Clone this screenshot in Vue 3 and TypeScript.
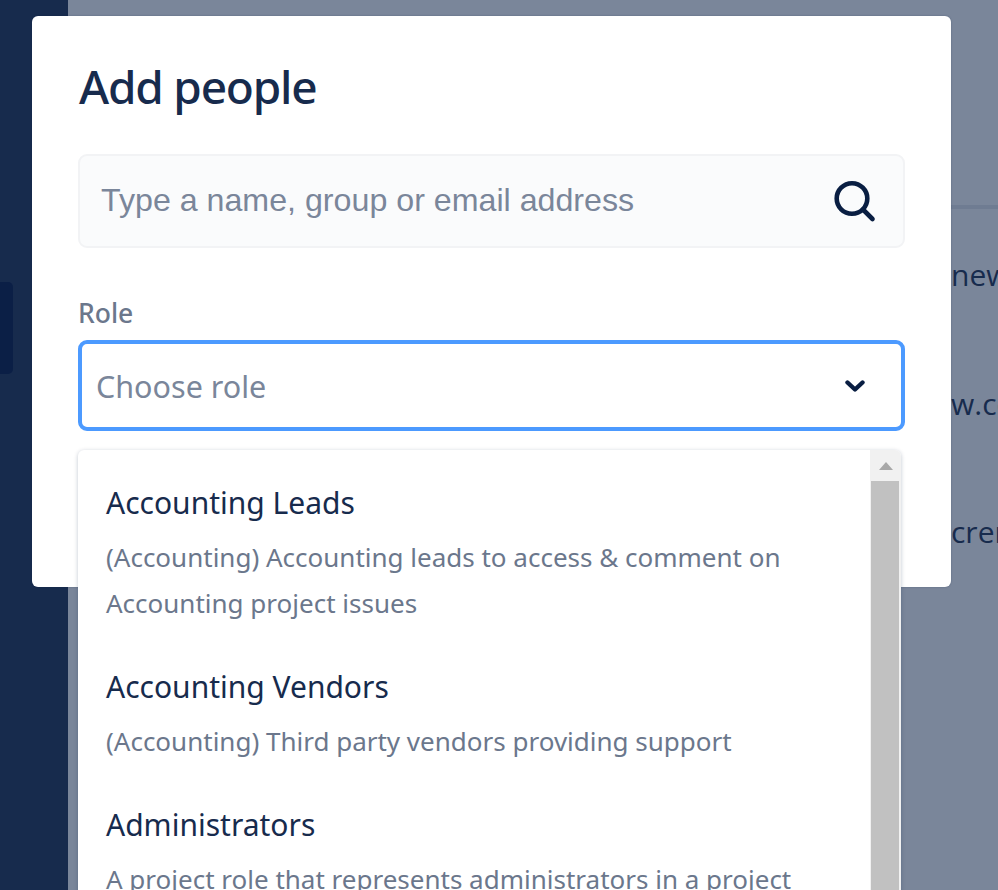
<script setup lang="ts">
interface Role { name: string; desc: string[] }
const roles: Role[] = [
  { name: 'Accounting Leads', desc: ['(Accounting) Accounting leads to access & comment on', 'Accounting project issues'] },
  { name: 'Accounting Vendors', desc: ['(Accounting) Third party vendors providing support'] },
  { name: 'Administrators', desc: ['A project role that represents administrators in a project'] },
]
const behind: string[] = ['new', 'w.co', 'crem']
</script>

<template>
  <div class="page">
    <aside class="sidebar"><div class="side-item"></div></aside>
    <main class="content">
      <div class="rule"></div>
      <div class="behind">
        <p v-for="t in behind" :key="t" class="behind-row">{{ t }}</p>
      </div>
    </main>

    <section class="modal">
      <h1 class="title">Add people</h1>
      <div class="search">
        <span class="search-ph">Type a name, group or email address</span>
        <svg class="search-icon" width="44" height="44" viewBox="0 0 44 44" fill="none">
          <circle cx="20" cy="19.5" r="15.3" stroke="#091e42" stroke-width="4.6" />
          <path d="M31 30.5 L40.5 40" stroke="#091e42" stroke-width="4.6" stroke-linecap="round" />
        </svg>
      </div>
      <label class="label">Role</label>
      <div class="select">
        <span class="select-ph">Choose role</span>
        <svg class="chevron" width="20" height="14" viewBox="0 0 20 14" fill="none">
          <path d="M2.5 3.5 L10 10.5 L17.5 3.5" stroke="#091e42" stroke-width="4.4" stroke-linecap="round" stroke-linejoin="round" />
        </svg>
      </div>
    </section>

    <div class="menu">
      <div class="list">
        <div v-for="r in roles" :key="r.name" class="option">
          <div class="opt-name">{{ r.name }}</div>
          <div v-for="d in r.desc" :key="d" class="opt-desc">{{ d }}</div>
        </div>
      </div>
      <div class="scrollbar">
        <div class="scroll-up"><span class="arrow"></span></div>
        <div class="thumb"></div>
      </div>
    </div>
  </div>
</template>

<style>
html, body { margin: 0; padding: 0; background: #7a869a; }
</style>

<style scoped>
.page {
  position: relative;
  width: 998px;
  height: 890px;
  overflow: hidden;
  display: flex;
  background: #7a869a;
  font-family: "Open Sans", "Noto Sans", sans-serif;
}
.sidebar {
  width: 68px;
  flex: none;
  background: #172b4d;
  padding-top: 282px;
  box-sizing: border-box;
}
.side-item {
  width: 13px;
  height: 92px;
  background: #0b1f46;
  border-radius: 0 5px 5px 0;
}
.content {
  flex: 1;
  padding-top: 205px;
  min-width: 0;
}
.rule {
  height: 4px;
  background: #6f7c92;
}
.behind {
  padding: 41px 0 0 883px;
  white-space: nowrap;
}
.behind-row {
  margin: 0;
  height: 128.5px;
  font-size: 30px;
  line-height: 50px;
  color: #172b4d;
}
.modal {
  position: absolute;
  left: 32px;
  top: 16px;
  width: 919px;
  height: 571px;
  box-sizing: border-box;
  padding: 40px 46px 0;
  background: #fff;
  border-radius: 6px;
  box-shadow: 0 0 2px rgba(9, 30, 66, 0.3);
}
.title {
  margin: 0 0 0 1px;
  font-size: 46px;
  line-height: 60px;
  font-weight: 500;
  letter-spacing: -1.2px;
  color: #172b4d;
  font-family: "Noto Sans", sans-serif;
}
.search {
  margin-top: 38px;
  height: 94px;
  box-sizing: border-box;
  border: 2px solid #f2f3f5;
  border-radius: 9px;
  background: #fafbfc;
  display: flex;
  align-items: center;
  justify-content: space-between;
  padding: 0 27px 1px 21px;
}
.search-ph {
  font-family: "Liberation Sans", Arial, sans-serif;
  font-size: 32.2px;
  color: #7a869a;
}
.search-icon { flex: none; }
.label {
  display: block;
  margin: 49px 0 0;
  font-size: 26.5px;
  line-height: 32px;
  font-weight: 500;
  color: #6b778c;
  font-family: "Noto Sans", sans-serif;
}
.select {
  margin-top: 11px;
  height: 91px;
  box-sizing: border-box;
  border: 4px solid #4c9aff;
  border-radius: 9px;
  background: #fff;
  display: flex;
  align-items: center;
  justify-content: space-between;
  padding: 0 36px 0 14px;
}
.select-ph {
  font-size: 30.5px;
  color: #7a869a;
  font-family: "Noto Sans", sans-serif;
}
.chevron { flex: none; }
.menu {
  position: absolute;
  left: 78px;
  top: 450px;
  width: 823px;
  height: 460px;
  display: flex;
  background: #fff;
  border-radius: 6px;
  box-shadow: 0 1px 4px rgba(9, 30, 66, 0.25);
  overflow: hidden;
}
.list {
  flex: 1;
  padding: 30px 28px 0;
  min-width: 0;
  font-family: "Noto Sans", sans-serif;
}
.option { margin-bottom: 38px; }
.opt-name {
  font-size: 30px;
  line-height: 46px;
  margin-bottom: 8px;
  color: #172b4d;
}
.opt-desc {
  font-size: 26px;
  line-height: 46px;
  color: #6b778c;
  white-space: nowrap;
}
.scrollbar {
  width: 31px;
  flex: none;
  background: #f1f1f1;
  display: flex;
  flex-direction: column;
}
.scroll-up {
  height: 31px;
  display: flex;
  align-items: center;
  justify-content: center;
}
.arrow {
  width: 0;
  height: 0;
  border-left: 7.5px solid transparent;
  border-right: 7.5px solid transparent;
  border-bottom: 8px solid #a8a8a8;
}
.thumb {
  flex: 1;
  margin: 0 2px 0 1px;
  background: #c1c1c1;
}
</style>
